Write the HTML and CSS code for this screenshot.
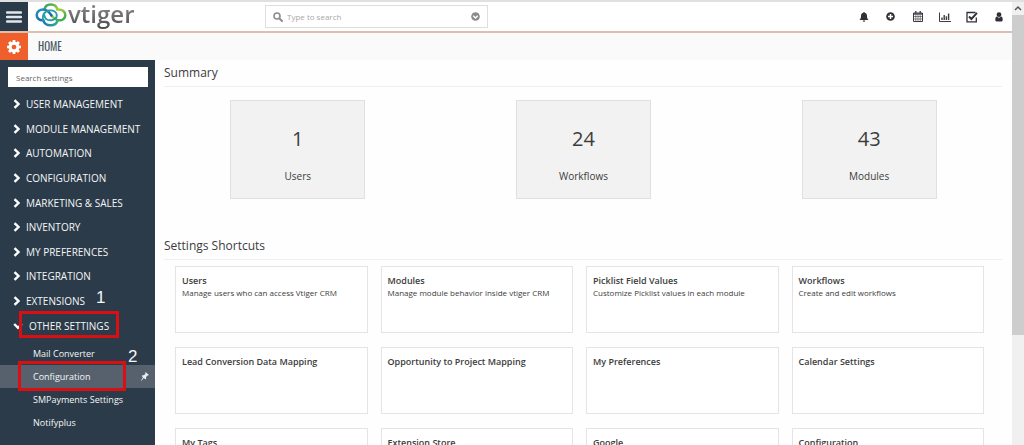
FILE: index.html
```html
<!DOCTYPE html>
<html lang="en">
<head>
<meta charset="utf-8">
<title>vtiger - Settings</title>
<link rel="stylesheet" href="styles.css">
</head>
<body>
<div class="window">
  <div class="app">
    <header class="topbar">
      <button class="menu-toggle" aria-label="Menu">
        <svg width="16" height="14" viewBox="0 0 16 14"><path d="M1 2.500h14M1 7h14M1 11.500h14" stroke="#dfe6ee" stroke-width="2.400" stroke-linecap="round"/></svg>
      </button>
      <a class="brand" href="#" aria-label="vtiger">
        <svg width="32" height="24" viewBox="0 0 32 24" fill="none" stroke-width="2.500" stroke-linecap="round">
          <defs>
            <linearGradient id="lime" x1="0" y1="0" x2="1" y2="1"><stop offset="0" stop-color="#2f9c6a"/><stop offset=".5" stop-color="#a9cf3a"/><stop offset="1" stop-color="#2fa052"/></linearGradient>
            <linearGradient id="blue" x1="0" y1="0" x2="1" y2="1"><stop offset="0" stop-color="#2a8fc8"/><stop offset="1" stop-color="#155a9c"/></linearGradient>
            <linearGradient id="teal" x1="0" y1="0" x2="1" y2="0"><stop offset="0" stop-color="#1a78b8"/><stop offset="1" stop-color="#35ac86"/></linearGradient>
          </defs>
          <path d="M9.500 6.500C10 3.300 12.500 1.500 15.800 1.500C19.200 1.500 21.800 3.600 22.300 6.500C27 6 30.300 8.500 30.300 12C30.300 15.500 27.300 17.700 23.800 17.300C20.500 17 18.500 15 16.500 12.500" stroke="url(#lime)"/>
          <path d="M16.500 12.500C14.500 9.500 12.500 6.800 8.700 6.600C4.500 6.400 1.700 8.800 1.700 12C1.700 15.400 4.600 17.600 8 17.300" stroke="url(#blue)"/>
          <path d="M8.300 17C8.800 20.300 12 22.300 15.500 22.300C19 22.300 22 20.500 22.500 17.300" stroke="url(#teal)"/>
          <path d="M8 17.300C7 12 9.500 8.500 14 7.500C18 6.800 21.500 8.700 21.800 12C22 15 19 17.500 15.500 17.300C12 17.200 9.800 15.500 9.500 12.500" stroke="#269dac" stroke-width="1.900"/>
        </svg>
        <span class="wordmark">vtiger</span>
      </a>
      <form class="search" role="search">
        <svg width="10" height="10" viewBox="0 0 10 10" fill="none" stroke="#8d8d8d" stroke-linecap="round"><circle cx="4" cy="4" r="3" stroke-width="1.600"/><path d="M6.500 6.500L9 9" stroke-width="1.900"/></svg>
        <input type="search" aria-label="Type to search" placeholder="Type to search">
        <button type="button" class="search-more" aria-label="Advanced search">
          <svg width="9" height="9" viewBox="0 0 9 9"><circle cx="4.500" cy="4.500" r="4.300" fill="#8b8b8b"/><path d="M2.300 3.700L4.500 5.900L6.700 3.700" fill="none" stroke="#fff" stroke-width="1.400"/></svg>
        </button>
      </form>
      <nav class="tools" aria-label="Tools">
        <button aria-label="Notifications"><svg width="10" height="10" viewBox="0 0 10 10" fill="#2d3238"><path d="M5 0a.7.7 0 0 1 .7.8C7.300 1.100 8 2.300 8 4c0 2.200.6 3.200 1.600 4H.4C1.400 7.200 2 6.200 2 4c0-1.700.7-2.900 2.300-3.200A.7.7 0 0 1 5 0zM3.700 8.500h2.600a1.300 1.300 0 0 1-2.600 0z"/></svg></button>
        <button aria-label="Quick create"><svg width="9" height="9" viewBox="0 0 9 9"><circle cx="4.500" cy="4.500" r="4.300" fill="#2d3238"/><path d="M4.500 2v5M2 4.500h5" stroke="#fff" stroke-width="1.500"/></svg></button>
        <button aria-label="Calendar"><svg width="10" height="11" viewBox="0 0 10 11" fill="none" stroke="#3a3d42"><path d="M.5 2h9v8.500h-9z"/><path d="M.5 3h9" stroke-width="1.400"/><path d="M.5 5.500h9M.5 8h9M2.800 4v6.500M5 4v6.500M7.200 4v6.500" stroke-width=".6"/><path d="M2.800 0v2.500M7.200 0v2.500" stroke-width="1.300"/></svg></button>
        <button aria-label="Reports"><svg width="12" height="10" viewBox="0 0 12 10" fill="none" stroke="#3a3d42"><path d="M.5 0.500v9H12"/><path d="M3 8V5.500M5.200 8V3M7.400 8V4.200M9.600 8V1.500" stroke-width="1.400"/></svg></button>
        <button aria-label="Tasks"><svg width="12" height="12" viewBox="0 0 12 12" fill="none" stroke="#2d3238"><path d="M10.300 6.500v4.300H1V1.500h8.500" stroke-width="1.300"/><path d="M3 5.500L5.400 8L11 1.800" stroke-width="1.900"/></svg></button>
        <button aria-label="Profile"><svg width="8" height="10" viewBox="0 0 8 10" fill="#2d3238"><circle cx="4" cy="2.700" r="2.400"/><path d="M1.700 4.600C.5 5 .3 6.500.3 8c0 .9.500 1.400 1.300 1.400h4.800c.8 0 1.300-.5 1.300-1.400 0-1.500-.2-3-1.400-3.400a3.400 3.400 0 0 1-4.600 0z"/></svg></button>
      </nav>
    </header>

    <div class="modulebar">
      <button class="gear" aria-label="Settings">
        <svg width="14" height="14" viewBox="0 -128 1536 1536" fill="#fff"><path d="M1024 640q0-106-75-181t-181-75-181 75-75 181 75 181 181 75 181-75 75-181zm512-109v222q0 12-8 23t-20 13l-185 28q-19 54-39 91 35 50 107 138 10 12 10 25t-9 23q-27 37-99 108t-94 71q-12 0-26-9l-138-108q-44 23-91 38-16 136-29 186-7 28-36 28h-222q-14 0-24.500-8.500t-11.500-21.500l-28-184q-49-16-90-37l-141 107q-10 9-25 9-14 0-25-11-126-114-165-168-7-10-7-23 0-12 8-23 15-21 51-66.500t54-70.500q-27-50-41-99l-183-27q-13-2-21-12.500t-8-23.500v-222q0-12 8-23t19-13l186-28q14-46 39-92-40-57-107-138-10-12-10-24 0-10 9-23 26-36 98.500-107.500t94.500-71.500q13 0 26 10l138 107q44-23 91-38 16-136 29-186 7-28 36-28h222q14 0 24.500 8.500t11.500 21.500l28 184q49 16 90 37l142-107q9-9 24-9 13 0 25 10 129 119 165 170 7 8 7 22 0 12-8 23-15 21-51 66.500t-54 70.500q26 50 41 98l183 28q13 2 21 12.500t8 23.500z"/></svg>
      </button>
      <a class="module-name" href="#">HOME</a>
    </div>

    <div class="body">
      <aside class="sidebar">
        <input class="settings-search" type="text" aria-label="Search settings" placeholder="Search settings">
        <ul class="menu">
          <li><a href="#"><svg class="chev" viewBox="0 0 8 10"><path d="M1.500 1.200L5.500 5L1.500 8.800"/></svg>USER MANAGEMENT</a></li>
          <li><a href="#"><svg class="chev" viewBox="0 0 8 10"><path d="M1.500 1.200L5.500 5L1.500 8.800"/></svg>MODULE MANAGEMENT</a></li>
          <li><a href="#"><svg class="chev" viewBox="0 0 8 10"><path d="M1.500 1.200L5.500 5L1.500 8.800"/></svg>AUTOMATION</a></li>
          <li><a href="#"><svg class="chev" viewBox="0 0 8 10"><path d="M1.500 1.200L5.500 5L1.500 8.800"/></svg>CONFIGURATION</a></li>
          <li><a href="#"><svg class="chev" viewBox="0 0 8 10"><path d="M1.500 1.200L5.500 5L1.500 8.800"/></svg>MARKETING &amp; SALES</a></li>
          <li><a href="#"><svg class="chev" viewBox="0 0 8 10"><path d="M1.500 1.200L5.500 5L1.500 8.800"/></svg>INVENTORY</a></li>
          <li><a href="#"><svg class="chev" viewBox="0 0 8 10"><path d="M1.500 1.200L5.500 5L1.500 8.800"/></svg>MY PREFERENCES</a></li>
          <li><a href="#"><svg class="chev" viewBox="0 0 8 10"><path d="M1.500 1.200L5.500 5L1.500 8.800"/></svg>INTEGRATION</a></li>
          <li><a href="#"><svg class="chev" viewBox="0 0 8 10"><path d="M1.500 1.200L5.500 5L1.500 8.800"/></svg>EXTENSIONS</a></li>
          <li class="open"><a href="#"><svg class="chev" viewBox="0 0 10 8"><path d="M1.200 2L5 5.800L8.800 2"/></svg>OTHER SETTINGS</a><span class="mark mark-group"></span><span class="step step-one">1</span></li>
        </ul>
        <ul class="submenu">
          <li><a href="#">Mail Converter</a></li>
          <li class="active"><a href="#">Configuration</a>
            <svg width="8" height="9" viewBox="0 0 8 9" fill="#e8edf2"><path d="M4.500 0L8 3L7 3.600L6.500 3.500L5 5.300L5.200 7L4.300 7.300L2.800 6L.5 8.800L0 8.400L2 5.300L.7 4L1.300 3.200L3 3.300L4.500 1.500L4.200 .8Z"/></svg>
            <span class="mark mark-item"></span><span class="step step-two">2</span></li>
          <li><a href="#">SMPayments Settings</a></li>
          <li><a href="#">Notifyplus</a></li>
        </ul>
      </aside>

      <main class="content">
        <h2>Summary</h2>
        <div class="stats">
          <a class="stat" href="#"><strong>1</strong><span>Users</span></a>
          <a class="stat" href="#"><strong>24</strong><span>Workflows</span></a>
          <a class="stat" href="#"><strong>43</strong><span>Modules</span></a>
        </div>
        <h2>Settings Shortcuts</h2>
        <div class="shortcuts">
          <a href="#"><b>Users</b><span>Manage users who can access Vtiger CRM</span></a>
          <a href="#"><b>Modules</b><span>Manage module behavior inside vtiger CRM</span></a>
          <a href="#"><b>Picklist Field Values</b><span>Customize Picklist values in each module</span></a>
          <a href="#"><b>Workflows</b><span>Create and edit workflows</span></a>
          <a href="#"><b>Lead Conversion Data Mapping</b></a>
          <a href="#"><b>Opportunity to Project Mapping</b></a>
          <a href="#"><b>My Preferences</b></a>
          <a href="#"><b>Calendar Settings</b></a>
          <a href="#"><b>My Tags</b></a>
          <a href="#"><b>Extension Store</b></a>
          <a href="#"><b>Google</b></a>
          <a href="#"><b>Configuration</b></a>
        </div>
      </main>
    </div>
  </div>
  <div class="scrollbar" aria-hidden="true">
    <svg width="12" height="13" viewBox="0 0 12 13" fill="none" stroke="#555" stroke-width="1.500"><path d="M3 8L6 5L9 8"/></svg>
    <div class="thumb"></div>
  </div>
</div>
</body>
</html>
```
FILE: styles.css
```css
* { box-sizing: border-box; }
body {
  margin: 0;
  font-family: "Open Sans", "Noto Sans", sans-serif;
  font-size: 10px;
  color: #3c3c3c;
  background: #fefefe;
}
a { color: inherit; text-decoration: none; }
ul { list-style: none; margin: 0; padding: 0; }
button { border: 0; padding: 0; background: none; display: flex; align-items: center; justify-content: center; }
input { font-family: inherit; outline: 0; }
svg { display: block; flex: none; }

.window { display: flex; height: 100vh; overflow: hidden; border-top: 2px solid #dfe1e1; }
.app { flex: 1; min-width: 0; display: flex; flex-direction: column; }

.topbar { display: flex; align-items: stretch; height: 31px; border-bottom: 2px solid #dcbfae; background: #fff; }
.menu-toggle { width: 28px; background: #2c3b49; }
.brand { display: flex; align-items: flex-start; width: 237px; padding: 1px 0 0 7px; gap: 1px; }
.wordmark {
  padding-bottom: 6px;
  font-size: 24px;
  font-weight: 600;
  line-height: 22px;
  color: transparent;
  background: linear-gradient(#909090, #444);
  background-clip: text;
}
.search { display: flex; align-items: center; width: 223px; height: 23px; margin-top: 3px; padding: 0 7px; gap: 4px; border: 1px solid #dedede; }
.search input { flex: 1; min-width: 0; border: 0; padding: 0; font-size: 8px; background: none; }
.search input::placeholder { color: #a8a8a8; opacity: 1; }
.tools { display: flex; margin-left: auto; }
.tools button { width: 27px; }

.modulebar { display: flex; height: 27px; background: #fafafa; }
.gear { width: 28px; background: #ef5f2b; }
.module-name { padding-left: 10px; font-family: Oswald, "Liberation Sans Narrow", "Roboto Condensed", "Open Sans", sans-serif; font-size: 11px; line-height: 26px; color: #4b5a68; }

.body { flex: 1; min-height: 0; display: flex; }
.sidebar { width: 155px; background: #2c3b49; color: #f4f6f8; }
.settings-search { display: block; width: 140px; height: 20px; margin: 7px 0 5px 8px; padding: 0 7px; border: 1px solid #fff; background: #fff; font-size: 8px; }
.settings-search::placeholder { color: #666; opacity: 1; }
.menu { display: flex; flex-direction: column; height: 246px; }
.menu li { flex: 1; position: relative; display: flex; }
.menu a { display: flex; align-items: center; gap: 5px; padding-left: 13px; font-size: 10px; }
.chev { width: 8px; height: 10px; fill: none; stroke: #fff; stroke-width: 2.400px; }
.menu .open a { gap: 6px; }
.open .chev { width: 10px; height: 8px; }
.submenu { padding-top: 4px; font-size: 9px; }
.submenu li { position: relative; display: flex; align-items: center; justify-content: space-between; height: 23px; padding: 0 6px 0 33px; }
.submenu .active { background: #56616d; }

.mark { position: absolute; border: 3px solid #d90f14; }
.mark-group { left: 19px; top: -2px; width: 100px; height: 27px; }
.mark-item { left: 18px; top: -4px; width: 108px; height: 30px; }
.step { position: absolute; font-family: "Liberation Sans", sans-serif; font-size: 17px; line-height: 18px; }
.step-one { left: 96px; top: -24px; }
.step-two { left: 128px; top: -17px; }

.content { flex: 1; min-width: 0; overflow: hidden; }
h2 { margin: 0 10px 0 9px; height: 27px; font-size: 12px; font-weight: 400; line-height: 26px; border-bottom: 1px solid #efefef; }
.stats { display: grid; grid-template-columns: repeat(3, 1fr); justify-items: center; padding: 13px 0 34px; }
.stat { display: flex; flex-direction: column; align-items: center; width: 135px; height: 99px; padding-top: 24px; gap: 13px; border: 1px solid #e0e0e0; background: #f2f2f2; font-size: 10px; line-height: 20px; }
.stat strong { font-size: 20px; line-height: 28px; font-weight: 400; }
.shortcuts { display: grid; grid-template-columns: repeat(4, minmax(0, 1fr)); grid-auto-rows: 67px; gap: 14px 13px; padding: 6px 28px 0 20px; }
.shortcuts a { display: flex; flex-direction: column; padding: 8px 6px; border: 1px solid #e4e4e4; background: #fff; font-size: 8px; line-height: 12px; white-space: nowrap; }
.shortcuts b { font-size: 9px; font-weight: 600; }

.scrollbar { width: 12px; background: #f0f0f0; }
.thumb { height: 320px; background: #cdcdcd; }
```
